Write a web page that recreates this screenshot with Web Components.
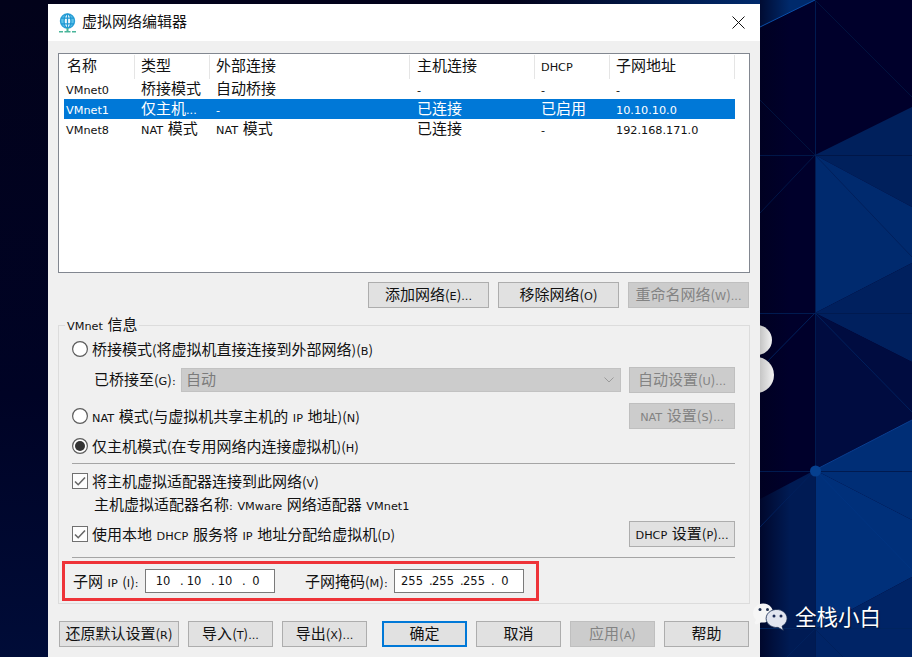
<!DOCTYPE html>
<html lang="zh-CN">
<head>
<meta charset="utf-8">
<title>虚拟网络编辑器</title>
<style>
    html, body { margin: 0; padding: 0; background: #02021a; }
    body { font: 15px/20px "Noto Sans CJK SC", sans-serif; color: #111; }
</style>
</head>
<body>
<vm-desktop>
    <vm-dialog>
        <v-t slot="title">虚拟网络编辑器</v-t>

        <vm-list></vm-list>

        <vm-button-row style="justify-content:flex-end; gap:9px; margin:9px 1px 0 0;">
            <vm-button style="width:121px"><v-t>添加网络(E)...</v-t></vm-button>
            <vm-button style="width:121px"><v-t>移除网络(O)</v-t></vm-button>
            <vm-button style="width:121px" disabled><v-t>重命名网络(W)...</v-t></vm-button>
        </vm-button-row>

        <vm-group label="VMnet 信息" style="margin-top:17px">
            <vm-radio style="height:24px"><v-t>桥接模式(将虚拟机直接连接到外部网络)(B)</v-t></vm-radio>
            <vm-button-row style="margin-top:6px; padding-left:22px; gap:8px;">
                <v-t style="width:79px; margin-bottom:2px">已桥接至(G):</v-t>
                <vm-combo style="flex:1"><v-t>自动</v-t></vm-combo>
                <vm-button style="width:106px" disabled><v-t>自动设置(U)...</v-t></vm-button>
            </vm-button-row>
            <vm-button-row style="margin-top:10px; justify-content:space-between;">
                <vm-radio><v-t>NAT 模式(与虚拟机共享主机的 IP 地址)(N)</v-t></vm-radio>
                <vm-button style="width:106px" disabled><v-t>NAT 设置(S)...</v-t></vm-button>
            </vm-button-row>
            <vm-radio checked style="height:24px; margin-top:5px"><v-t>仅主机模式(在专用网络内连接虚拟机)(H)</v-t></vm-radio>
            <vm-rule style="margin-top:5px"></vm-rule>
            <vm-check style="height:24px; margin-top:5px"><v-t>将主机虚拟适配器连接到此网络(V)</v-t></vm-check>
            <v-t style="display:block; height:20px; margin:1px 0 0 22px">主机虚拟适配器名称: VMware 网络适配器 VMnet1</v-t>
            <vm-button-row style="margin-top:7px; justify-content:space-between;">
                <vm-check><v-t>使用本地 DHCP 服务将 IP 地址分配给虚拟机(D)</v-t></vm-check>
                <vm-button style="width:106px"><v-t>DHCP 设置(P)...</v-t></vm-button>
            </vm-button-row>
            <vm-rule style="margin-top:10px"></vm-rule>
            <vm-subnet style="margin-top:3px">
                <v-t style="width:72px">子网 IP (I):</v-t>
                <vm-ip value="10,10,10,0"></vm-ip>
                <v-t style="width:89px; margin-left:30px">子网掩码(M):</v-t>
                <vm-ip value="255,255,255,0"></vm-ip>
            </vm-subnet>
        </vm-group>

        <vm-button-row style="margin:17px 1px 0 1px; gap:9px;">
            <vm-button style="width:120px"><v-t>还原默认设置(R)</v-t></vm-button>
            <vm-button style="width:85px"><v-t>导入(T)...</v-t></vm-button>
            <vm-button style="width:85px; margin-right:6px"><v-t>导出(X)...</v-t></vm-button>
            <vm-button style="width:85px" default><v-t>确定</v-t></vm-button>
            <vm-button style="width:85px"><v-t>取消</v-t></vm-button>
            <vm-button style="width:85px" disabled><v-t>应用(A)</v-t></vm-button>
            <vm-button style="width:85px"><v-t>帮助</v-t></vm-button>
        </vm-button-row>
    </vm-dialog>
    <vm-brand><v-t>全栈小白</v-t></vm-brand>
</vm-desktop>

<script>
// v-t: 中文 15px, 拉丁字符用小一号的字体, 括号偏高, 和原来的 Windows 混排一样
class VText extends HTMLElement {
    constructor() {
        super();
        this.attachShadow({ mode: 'open' });
    }
    connectedCallback() {
        if (this._done) return;
        this._done = true;
        const text = this.textContent;
        this.textContent = '';
        const runs = text.split(/([()]|[^\u0080-\uffff()]+)/).filter(Boolean);
        const html = runs.map(r => {
            if (r === '(' || r === ')') return `<span class="p">${r}</span>`;
            return /^[\x00-\x7f]/.test(r) ? `<span class="l">${r}</span>` : `<span>${r}</span>`;
        }).join('');
        // white-space: pre, so nothing may stand between the tags here
        this.shadowRoot.innerHTML = `<style>:host { display: inline-block; white-space: pre; } .l { font-family: "DejaVu Sans", sans-serif; font-size: 0.75em; word-spacing: 1px; line-height: 0; } .p { font-size: 0.9em; line-height: 0; }</style>${html}`;
    }
}

class VmDesktop extends HTMLElement {
    constructor() {
        super();
        this.attachShadow({ mode: 'open' });
        this.shadowRoot.innerHTML = `
            <style>
                :host { display: block; position: relative; width: 912px; height: 657px; overflow: hidden; background: #02021a; }
                svg { position: absolute; left: 0; top: 0; }
            </style>
            <svg width="912" height="657" viewBox="0 0 912 657">
                <defs>
                    <linearGradient id="blob" x1="0" x2="1" y1="0" y2="0">
                        <stop offset="0.5" stop-color="#b9b9b9"/><stop offset="1" stop-color="#f2f2f2"/>
                    </linearGradient>
                    <linearGradient id="top" x1="0" x2="1" y1="0" y2="0">
                        <stop offset="0.65" stop-color="#02021a"/><stop offset="1" stop-color="#002a6c"/>
                    </linearGradient>
                    <linearGradient id="shade" x1="0" x2="1" y1="0" y2="0">
                        <stop offset="0" stop-color="#00011f" stop-opacity="0.75"/><stop offset="1" stop-color="#00011f" stop-opacity="0"/>
                    </linearGradient>
                    <linearGradient id="leftStrip" x1="0" x2="0" y1="0" y2="1">
                        <stop offset="0" stop-color="#02021a"/><stop offset="0.6" stop-color="#000325"/><stop offset="1" stop-color="#000c38"/>
                    </linearGradient>
                </defs>
                <rect x="0" y="0" width="48" height="657" fill="url(#leftStrip)"/>
                <rect x="48" y="0" width="712" height="4" fill="url(#top)"/>
                <rect x="760" y="0" width="152" height="657" fill="#00002b"/>
                <polygon points="760,0 815,0 760,27" fill="#002a6c"/>
                <polygon points="815,155 912,107 912,207" fill="#00205c"/>
                <polygon points="815,155 912,207 912,263 815,313" fill="#002a6e"/>
                <polygon points="815,313 912,263 912,362" fill="#00205e"/>
                <polygon points="815,313 912,362 912,420 815,470" fill="#000c40"/>
                <polygon points="815,470 912,420 912,520" fill="#002e76"/>
                <polygon points="815,470 912,520 912,577 815,629" fill="#00307a"/>
                <polygon points="815,629 912,577 912,657 815,657" fill="#002466"/>
                <polygon points="815,470 760,499 760,657 815,657" fill="#001b54"/>
                <rect x="760" y="0" width="30" height="657" fill="url(#shade)"/>
                <g stroke="#00205c" stroke-width="1" fill="none">
                    <line x1="815.5" y1="0" x2="815.5" y2="657" stroke="#001a50"/>
                    <line x1="760" y1="155.5" x2="912" y2="155.5" stroke="#001648"/>
                    <line x1="760" y1="313.5" x2="912" y2="313.5" stroke="#001a50"/>
                    <line x1="760" y1="471.5" x2="912" y2="471.5" stroke="#001a50"/>
                    <line x1="760" y1="628.5" x2="912" y2="628.5" stroke="#00245f"/>
                    <line x1="815" y1="0" x2="912" y2="97" stroke="#00123e"/>
                    <line x1="815" y1="155" x2="760" y2="100" stroke="#00123e"/>
                    <line x1="815" y1="155" x2="760" y2="213" stroke="#001648"/>
                    <line x1="815" y1="155" x2="912" y2="257"/>
                    <line x1="815" y1="313" x2="760" y2="369"/>
                    <line x1="815" y1="313" x2="912" y2="412"/>
                    <line x1="815" y1="470" x2="760" y2="527"/>
                    <line x1="815" y1="470" x2="912" y2="570" stroke="#003480"/>
                    <line x1="815" y1="629" x2="787" y2="657"/>
                    <line x1="815" y1="629" x2="843" y2="657"/>
                </g>
                <line x1="760" y1="27" x2="815" y2="0" stroke="#0a4ea8" stroke-width="1"/>
                <line x1="815" y1="470" x2="912" y2="420" stroke="#0a3f8f" stroke-width="1"/>
                <circle cx="815.5" cy="471" r="5.5" fill="#06408f"/>
                <circle cx="757" cy="340" r="15" fill="url(#blob)"/>
                <circle cx="756" cy="375" r="18" fill="url(#blob)"/>
            </svg>
            <slot></slot>
        `;
    }
}

class VmDialog extends HTMLElement {
    constructor() {
        super();
        this.attachShadow({ mode: 'open' });
        this.shadowRoot.innerHTML = `
            <style>
                :host {
                    position: absolute; left: 48px; top: 4px; width: 712px; height: 653px;
                    display: block; background: #f0f0f0; overflow: hidden;
                }
                .title {
                    height: 37px; background: #fff; display: flex; align-items: center;
                    padding: 0 15px 0 11px;
                }
                .globe { margin-right: 6px; }
                .caption { flex: 1; padding-bottom: 4px; }
                .body { display: flex; flex-direction: column; padding: 12px 10px 0; }
            </style>
            <div class="title">
                <svg class="globe" width="17" height="20" viewBox="0 0 17 20">
                    <circle cx="8.5" cy="8" r="7" fill="#5cc3ea" stroke="#2b9fd6" stroke-width="1.4"/>
                    <ellipse cx="8.5" cy="8" rx="3.4" ry="7" fill="#e8f7fd" stroke="#1f97d2" stroke-width="1.2"/>
                    <path d="M2 5.2h13M2 10.8h13M8.5 1v14" stroke="#1f97d2" stroke-width="1.2" fill="none"/>
                    <rect x="7.5" y="15" width="2" height="3" fill="#48b59a"/>
                    <rect x="0" y="18" width="4" height="1.5" fill="#48b59a"/>
                    <rect x="5.5" y="18" width="6" height="1.5" fill="#48b59a"/>
                    <rect x="13" y="18" width="4" height="1.5" fill="#48b59a"/>
                </svg>
                <div class="caption"><slot name="title"></slot></div>
                <svg width="13" height="13" viewBox="0 0 13 13"><path d="M0.5 0.5l12 12M12.5 0.5l-12 12" stroke="#111" stroke-width="1" fill="none"/></svg>
            </div>
            <div class="body"><slot></slot></div>
        `;
    }
}

const LIST_COLUMNS = '70px 75px 200px 125px 75px 125px';

class VmList extends HTMLElement {
    constructor() {
        super();
        this.attachShadow({ mode: 'open' });
        const heads = ['名称', '类型', '外部连接', '主机连接', 'DHCP', '子网地址'];
        const rows = [
            ['VMnet0', '桥接模式', '自动桥接', '-', '-', '-'],
            ['VMnet1', '仅主机...', '-', '已连接', '已启用', '10.10.10.0'],
            ['VMnet8', 'NAT 模式', 'NAT 模式', '已连接', '-', '192.168.171.0']
        ];
        const cells = (r, cls) => r.map(c => `<div class="${cls}"><v-t>${c}</v-t></div>`).join('');
        this.shadowRoot.innerHTML = `
            <style>
                :host {
                    display: block; height: 218px; background: #fff; border: 1px solid #828790;
                    box-sizing: content-box;
                }
                .grid { display: grid; grid-template-columns: ${LIST_COLUMNS}; margin-left: 5px; width: 670px; }
                .head { height: 24px; margin: 1px 0 0 6px; }
                .row { height: 20px; }
                .h { height: 24px; line-height: 20px; padding-left: 6px; border-right: 1px solid #e5e5e5; box-sizing: border-box; white-space: nowrap; }
                .c { padding-left: 7px; white-space: nowrap; line-height: 18px; }
                .grid > :first-child { padding-left: 2px; }
                .head > :nth-child(4) { padding-left: 7px; }
                .row > :nth-child(4) { padding-left: 8px; }
                .sel { background: #0078d7; color: #fff; width: 671px; }
            </style>
            <div class="grid head">${cells(heads, 'h')}</div>
            ${rows.map((r, i) => `<div class="grid row ${i === 1 ? 'sel' : ''}">${cells(r, 'c')}</div>`).join('')}
        `;
    }
}

class VmButton extends HTMLElement {
    constructor() {
        super();
        this.attachShadow({ mode: 'open' });
        this.shadowRoot.innerHTML = `
            <style>
                :host {
                    display: flex; align-items: center; justify-content: center; flex: none;
                    height: 26px; box-sizing: border-box; background: #e1e1e1; border: 1px solid #adadad;
                    line-height: 20px; white-space: nowrap; padding-bottom: 2px;
                }
                :host([disabled]) { background: #cccccc; border-color: #bfbfbf; color: #838383; }
                :host([default]) { border: 2px solid #0078d7; }
            </style>
            <slot></slot>
        `;
    }
}

class VmButtonRow extends HTMLElement {
    constructor() {
        super();
        this.attachShadow({ mode: 'open' });
        this.shadowRoot.innerHTML = `
            <style>:host { display: flex; align-items: center; }</style>
            <slot></slot>
        `;
    }
}

class VmGroup extends HTMLElement {
    constructor() {
        super();
        this.attachShadow({ mode: 'open' });
        this.shadowRoot.innerHTML = `
            <style>
                :host {
                    display: flex; flex-direction: column; position: relative; height: 279px; box-sizing: border-box;
                    border: 1px solid #dcdcdc; padding: 11px 14px 0 13px;
                }
                .legend {
                    position: absolute; left: 6px; top: -11px; padding: 0 2px; background: linear-gradient(#f0f0f0, #f0f0f0) 0 9px / 100% 4px no-repeat;
                    line-height: 18px;
                }
            </style>
            <div class="legend"><v-t>${this.getAttribute('label')}</v-t></div>
            <slot></slot>
        `;
    }
}

class VmRadio extends HTMLElement {
    constructor() {
        super();
        this.attachShadow({ mode: 'open' });
        const dot = this.hasAttribute('checked') ? '<circle cx="8" cy="8" r="5" fill="#333"/>' : '';
        this.shadowRoot.innerHTML = `
            <style>
                :host { display: flex; align-items: center; gap: 4px; }
                svg { flex: none; }
            </style>
            <svg width="16" height="16" viewBox="0 0 16 16">
                <circle cx="8" cy="8" r="7.4" fill="#fff" stroke="#5c5c5c" stroke-width="1.2"/>${dot}
            </svg>
            <slot></slot>
        `;
    }
}

class VmCheck extends HTMLElement {
    constructor() {
        super();
        this.attachShadow({ mode: 'open' });
        this.shadowRoot.innerHTML = `
            <style>
                :host { display: flex; align-items: center; gap: 4px; }
                svg { flex: none; }
            </style>
            <svg width="16" height="16" viewBox="0 0 16 16">
                <rect x="0.5" y="0.5" width="15" height="15" fill="#fdfdfd" stroke="#707070"/>
                <path d="M3 8.5l3.2 3.2L13 4.5" fill="none" stroke="#666" stroke-width="1.6"/>
            </svg>
            <slot></slot>
        `;
    }
}

class VmCombo extends HTMLElement {
    constructor() {
        super();
        this.attachShadow({ mode: 'open' });
        this.shadowRoot.innerHTML = `
            <style>
                :host {
                    display: flex; align-items: center; justify-content: space-between; height: 24px;
                    box-sizing: border-box; background: #cccccc; border: 1px solid #c2c2c2;
                    color: #7b7b7b; padding: 0 6px 0 4px;
                }
                ::slotted(*) { margin-bottom: 2px; }
            </style>
            <slot></slot>
            <svg width="10" height="6" viewBox="0 0 10 6"><path d="M0.5 0.5L5 5l4.5-4.5" fill="none" stroke="#9b9b9b"/></svg>
        `;
    }
}

class VmRule extends HTMLElement {
    constructor() {
        super();
        this.attachShadow({ mode: 'open' });
        this.shadowRoot.innerHTML = `<style>:host { display: block; height: 1px; background: #a5a5a5; }</style>`;
    }
}

class VmSubnet extends HTMLElement {
    constructor() {
        super();
        this.attachShadow({ mode: 'open' });
        this.shadowRoot.innerHTML = `
            <style>
                :host {
                    display: flex; align-items: center; height: 40px; width: 477px; box-sizing: border-box;
                    margin-left: -10px; border: 3px solid #ee3338; padding-left: 8px;
                }
            </style>
            <slot></slot>
        `;
    }
}

class VmIp extends HTMLElement {
    constructor() {
        super();
        this.attachShadow({ mode: 'open' });
        const parts = this.getAttribute('value').split(',');
        const segs = parts.map((p, i) => `<span class="seg">${p}</span>${i < 3 ? '<span class="dot">.</span>' : ''}`).join('');
        this.shadowRoot.innerHTML = `
            <style>
                :host {
                    display: flex; align-items: center; flex: none; width: 130px; height: 24px; box-sizing: border-box;
                    background: #fff; border: 1px solid #7a7a7a; padding-left: 6px;
                    font: 11.5px "DejaVu Sans", sans-serif;
                }
                .seg { width: 22px; margin-right: 6px; text-align: center; }
                .dot { width: 3px; text-align: center; }
            </style>
            ${segs}
        `;
    }
}

class VmBrand extends HTMLElement {
    constructor() {
        super();
        this.attachShadow({ mode: 'open' });
        this.shadowRoot.innerHTML = `
            <style>
                :host {
                    position: absolute; left: 753px; top: 599px; display: flex; align-items: center; gap: 6px; height: 34px;
                    color: #fff; font-size: 21.5px; line-height: 34px; text-shadow: 1px 1px 1px rgba(0,0,0,.45);
                }
            </style>
            <svg width="36" height="30" viewBox="0 0 36 30">
                <path d="M1.5 22L3 18.8A10 9.6 0 1 1 8 21.4L3 23.6z" fill="#f6f6f6"/>
                <circle cx="7" cy="8.5" r="1.5" fill="#20304f"/>
                <circle cx="14.5" cy="8.5" r="1.5" fill="#20304f"/>
                <path d="M30.5 29.5L29 25.2A10.5 9 0 1 0 25 26.4z" fill="#e1e5f0" stroke="#12274f" stroke-width="0.8"/>
                <circle cx="21" cy="15" r="1.5" fill="#1a2a55"/>
                <circle cx="28" cy="15" r="1.5" fill="#1a2a55"/>
            </svg>
            <slot></slot>
        `;
    }
}

customElements.define('vm-desktop', VmDesktop);
customElements.define('vm-dialog', VmDialog);
customElements.define('vm-list', VmList);
customElements.define('vm-button', VmButton);
customElements.define('vm-button-row', VmButtonRow);
customElements.define('vm-group', VmGroup);
customElements.define('vm-radio', VmRadio);
customElements.define('vm-check', VmCheck);
customElements.define('vm-combo', VmCombo);
customElements.define('vm-rule', VmRule);
customElements.define('vm-subnet', VmSubnet);
customElements.define('vm-ip', VmIp);
customElements.define('vm-brand', VmBrand);
customElements.define('v-t', VText);
</script>
</body>
</html>
